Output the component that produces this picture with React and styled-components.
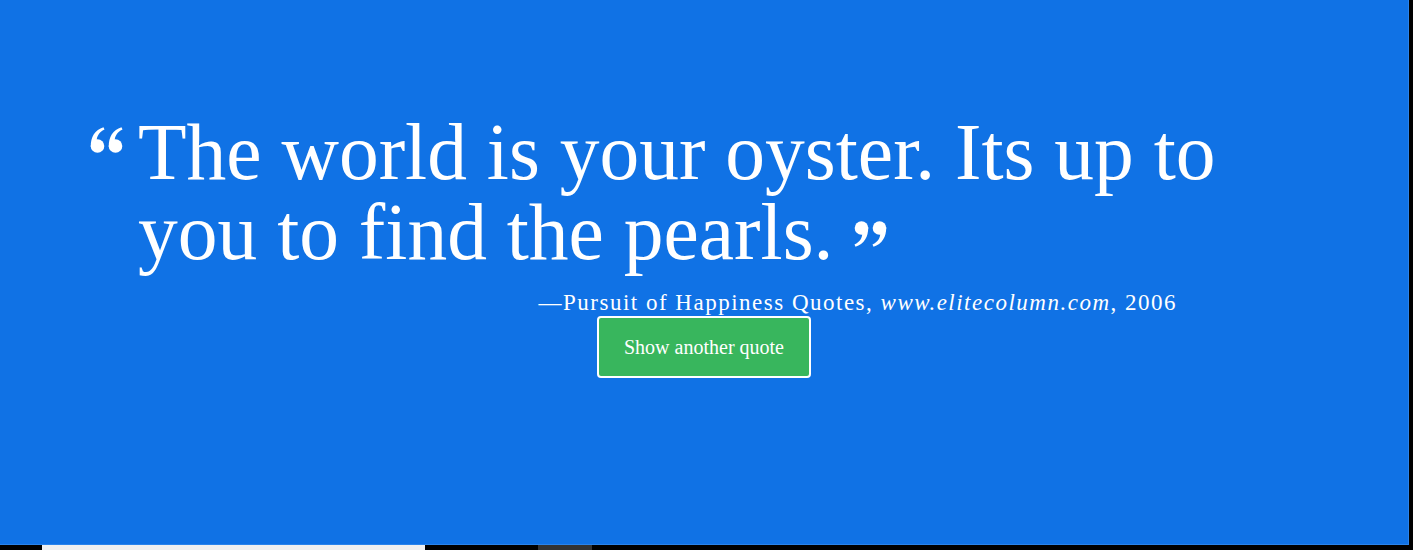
import styled, { createGlobalStyle } from "styled-components";

const GlobalStyle = createGlobalStyle`
  html, body {
    margin: 0;
    padding: 0;
    background: #000;
  }
  body {
    font-family: "Liberation Serif", "DejaVu Serif", serif;
    overflow: hidden;
  }
`;

const Frame = styled.div`
  width: 1413px;
  height: 550px;
  display: flex;
  flex-direction: column;
`;

const Panel = styled.main`
  width: 1409px;
  height: 545px;
  box-sizing: border-box;
  background: #1072e5;
  border-right: 1px solid #2a84ec;
  border-bottom: 1px solid #2a84ec;
  display: flex;
  flex-direction: column;
  padding-top: 112px;
  color: #fff;
`;

const Quote = styled.blockquote`
  margin: 0 0 0 90px;
  display: flex;
  align-items: flex-start;
  gap: 14px;
`;

const QuoteText = styled.p`
  margin: 0;
  width: 1110px;
  font-size: 79.5px;
  line-height: 80px;
  font-weight: 400;
`;

const Mark = styled.svg`
  flex: none;
  fill: #fff;
  margin-top: ${(p) => p.$top || 0}px;
  vertical-align: ${(p) => p.$align || "baseline"};
  margin-left: ${(p) => p.$left || 0}px;
`;

const Author = styled.p`
  margin: 18px 231px 0 0;
  align-self: flex-end;
  font-size: 23px;
  letter-spacing: 1.5px;
  line-height: 26px;
`;

const Site = styled.em`
  font-style: italic;
`;

const Button = styled.button`
  align-self: center;
  margin-top: 0;
  width: 214px;
  height: 62px;
  background: #38b65d;
  color: #fff;
  border: 2px solid #fff;
  border-radius: 4px;
  font-family: "Liberation Serif", "DejaVu Serif", serif;
  font-size: 20px;
  cursor: pointer;
`;

const Footer = styled.div`
  height: 5px;
  display: flex;
`;

const Bar = styled.div`
  height: 5px;
  width: ${(p) => p.$w}px;
  margin-left: ${(p) => p.$left}px;
  background: ${(p) => p.$color};
`;

const OpenQuote = () => (
  <Mark width="34" height="26" viewBox="0 0 34 26" $top={15}>
    <circle cx="7.5" cy="19" r="6.8" />
    <path d="M0.8 20 C0.5 10 5 3 13.5 0.3 L14.5 2.4 C9 5 6.8 9.5 6.8 13 Z" />
    <circle cx="25.5" cy="19" r="6.8" />
    <path d="M18.8 20 C18.5 10 23 3 31.5 0.3 L32.5 2.4 C27 5 24.8 9.5 24.8 13 Z" />
  </Mark>
);

const CloseQuote = () => (
  <Mark width="34" height="26" viewBox="0 0 34 26" $left={20} $align="12px">
    <g transform="rotate(180 17 13)">
      <circle cx="7.5" cy="19" r="6.8" />
      <path d="M0.8 20 C0.5 10 5 3 13.5 0.3 L14.5 2.4 C9 5 6.8 9.5 6.8 13 Z" />
      <circle cx="25.5" cy="19" r="6.8" />
      <path d="M18.8 20 C18.5 10 23 3 31.5 0.3 L32.5 2.4 C27 5 24.8 9.5 24.8 13 Z" />
    </g>
  </Mark>
);

export default function App() {
  return (
    <>
      <GlobalStyle />
      <Frame>
        <Panel>
          <Quote>
            <OpenQuote />
            <QuoteText>
              The world is your oyster. Its up to you to find the pearls.
              <CloseQuote />
            </QuoteText>
          </Quote>
          <Author>
            —Pursuit of Happiness Quotes, <Site>www.elitecolumn.com</Site>, 2006
          </Author>
          <Button type="button">Show another quote</Button>
        </Panel>
        <Footer>
          <Bar $w={383} $left={42} $color="#f0f0f0" />
          <Bar $w={54} $left={113} $color="#333" />
        </Footer>
      </Frame>
    </>
  );
}
